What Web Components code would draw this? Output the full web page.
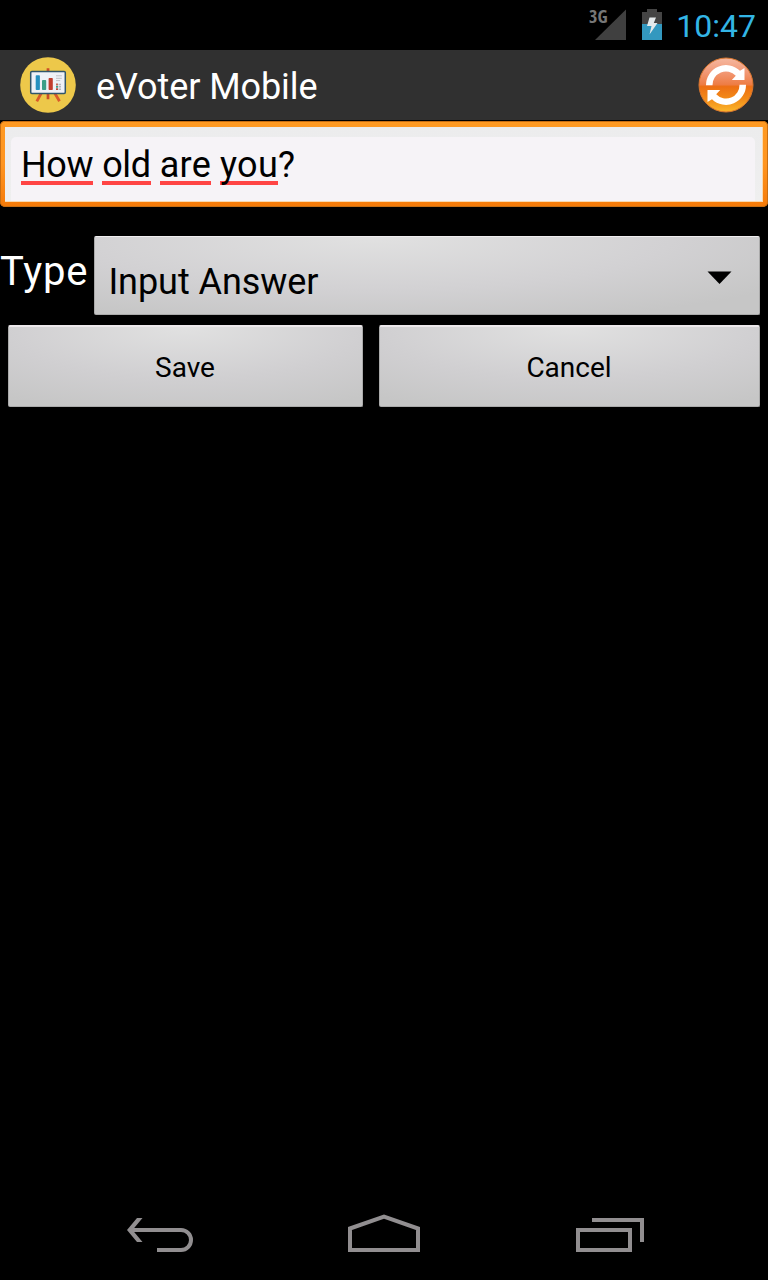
<!DOCTYPE html>
<html lang="en">
<head>
<meta charset="utf-8">
<title>eVoter Mobile</title>
<style>
html,body{margin:0;background:#000}
body{font-family:Roboto,"Liberation Sans",sans-serif;width:768px;height:1280px;overflow:hidden}
</style>
</head>
<body>
<voter-app></voter-app>
<script>
const define = (name, html) => customElements.define(name, class extends HTMLElement {
  constructor() {
    super();
    const t = document.createElement('template');
    t.innerHTML = html;
    this.attachShadow({mode: 'open'}).append(t.content.cloneNode(true));
  }
});

define('status-bar', `
<style>
:host{display:flex;height:50px;background:#000;justify-content:flex-end;color:#33b5e5;box-sizing:border-box;padding-right:12px}
.net{font:bold 17px/17px "Open Sans",Roboto,sans-serif;font-stretch:condensed;color:#777;width:19px;margin-top:8px;height:17px;white-space:nowrap}
.net span{display:inline-block;transform:scaleX(1.05);transform-origin:0 0}
svg{display:block;flex:none}
.time{font-size:32px;line-height:50px;padding-top:1px;box-sizing:border-box;height:50px;margin-left:12px;width:80px;text-align:right;white-space:nowrap}
</style>
<div class="net"><span>3G</span></div>
<svg style="margin-left:-13px" width="31" height="50"><path d="M0 40L31 9.500V40z" fill="#404040"/></svg>
<svg style="margin-left:15px;margin-right:1px" width="22" height="50"><path d="M1 12h5V9h10v3h5v28H1z" fill="#444"/><path d="M1 24h20v16H1z" fill="#3398bf"/><path d="M8.500 17.500H15L12.800 23H16.500L8.500 34.500 10.500 26H6z" fill="#e4e9eb"/></svg>
<div class="time">10:47</div>`);

define('app-logo', `
<style>:host{display:block;width:56px;height:56px}svg{display:block}</style>
<svg width="56" height="56">
<circle cx="28" cy="28" r="27.800" fill="#edc84a"/>
<path d="M28 11.300v3M28 37v5.300" stroke="#cc4c27" stroke-width="2.700"/>
<path d="M21.300 36L16.800 44.300M34.700 36L39.500 44.300" stroke="#d95a2b" stroke-width="2.800"/>
<rect x="10.700" y="14.400" width="34.600" height="22" rx="1.200" fill="#eff1f7" stroke="#31566b" stroke-width="1.500"/>
<rect x="15.700" y="18.300" width="4.200" height="14.800" rx=".8" fill="#2690bf"/><rect x="22" y="23" width="4.200" height="10.100" rx=".8" fill="#3b9e88"/><rect x="28.600" y="21" width="4.200" height="12.100" rx=".8" fill="#c13c2d"/>
<path d="M36 18.800h5.800M36 21.300h5.800M36 23.600h4.200" stroke="#bfc1c5"/>
<path d="M36 27.500h2" stroke="#c66a59" stroke-width="1.800"/><path d="M36 29.800h2" stroke="#3b9e88" stroke-width="1.800"/><path d="M36 32.200h2" stroke="#b5483c" stroke-width="1.800"/>
<path d="M38.500 27.500h2.500M38.500 29.800h2.500M38.500 32.200h2.500" stroke="#b5b8bd" stroke-width="1.400"/>
</svg>`);

define('refresh-button', `
<style>:host{display:block;width:56px;height:56px}svg{display:block}</style>
<svg width="56" height="56">
<defs><linearGradient id="g" x2="0" y2="1"><stop offset="0" stop-color="#f5b8a0"/><stop offset=".25" stop-color="#f29a78"/><stop offset=".49" stop-color="#ee7d45"/><stop offset=".53" stop-color="#ed6f14"/><stop offset=".75" stop-color="#f28a18"/><stop offset="1" stop-color="#fbb72c"/></linearGradient></defs>
<circle cx="28" cy="28" r="27" fill="url(#g)" stroke="#d9762e" stroke-width="1"/>
<g fill="#fff"><path d="M8 28.300A20 20 0 0 1 42 13.800L46.500 11V23H33.800L37.800 18.700A13.500 13.500 0 0 0 14.500 28.300z"/>
<path d="M8 28.300A20 20 0 0 1 42 13.800L46.500 11V23H33.800L37.800 18.700A13.500 13.500 0 0 0 14.500 28.300z" transform="rotate(180 28 28)"/></g>
</svg>`);

define('action-bar', `
<style>
:host{display:flex;box-sizing:border-box;height:70px;background:#303030;align-items:center;padding:0 14px 0 20px;color:#fff}
.t{font-size:36px;letter-spacing:-.08px;line-height:42px;padding-top:3px;margin-left:20px;flex:1;white-space:nowrap}
</style>
<app-logo></app-logo><div class="t"><slot></slot></div><refresh-button></refresh-button>`);

define('question-input', `
<style>
:host{display:block;box-sizing:border-box;height:86px;margin-top:1px;border-radius:5px;padding:6px 5px 5px;background:linear-gradient(#ff9a22,#ff9520 50%,#f57a08);box-shadow:inset 0 0 0 1px #c86e12}
.o{height:75px;box-sizing:border-box;background:linear-gradient(#ececed,#efefef);padding:10px 7px 0 6px;border:solid #f8d9b0;border-width:0 1px 1px 0}
.i{height:64px;box-sizing:border-box;background:#f6f3f7;border-radius:5px 5px 0 0;padding:5px 0 0 10px;font-size:36px;line-height:46px;color:#000;white-space:nowrap}
</style>
<div class="o"><div class="i"><slot></slot></div></div>`);

define('spell-word', `
<style>:host{display:inline-block;line-height:46px;height:46px;background:linear-gradient(#ff4444,#ff4444) 0 39px/100% 4px no-repeat}</style><slot></slot>`);

define('type-spinner', `
<style>
:host{display:flex;box-sizing:border-box;width:666px;height:79px;border:1px solid #aaa;border-top-color:#f0eef0;border-radius:2px;background:radial-gradient(ellipse 75% 115% at 42% 0,#e1e1e1,#d2d1d3 60%,#c6c6c6);padding:12px 27px 0 13px;font-size:36px;letter-spacing:-.06px;color:#000;justify-content:space-between}
.t{line-height:66px;height:66px;white-space:nowrap}
svg{display:block;margin-top:22px}
</style>
<div class="t"><slot></slot></div><svg width="25" height="14"><path d="M.5.500h24L12.500 13z"/></svg>`);

define('gray-button', `
<style>
:host{display:block;box-sizing:border-box;height:82px;border:1px solid #aaa;border-top:2px solid #ece8eb;border-radius:2px;background:radial-gradient(ellipse 85% 110% at 50% 0,#e1e1e1,#d0cfd1 60%,#c6c6c6);font-size:28px;line-height:82px;color:#000;text-align:center}
</style><slot></slot>`);

define('nav-bar', `
<style>:host{display:grid;grid-template-columns:221px 228px 69px;height:96px;align-items:center;box-sizing:border-box;padding:8px 0 0 127px}svg{display:block;fill:none;stroke:#918e90;stroke-width:4}</style>
<svg width="68" height="40"><path d="M3 14H54A10 10 0 0 1 54 34H30"/><path d="M10 2h5.500L5.500 14L15.500 26H10L0 14z" fill="#918e90" stroke="none"/></svg>
<svg width="72" height="40" overflow="visible"><path d="M2 12.500L36 .5L70 12.500V34H2z"/></svg>
<svg width="69" height="40"><path d="M2 14H54V34H2zM16 4H66V26"/></svg>`);

define('voter-app', `
<style>
:host{display:flex;flex-direction:column;width:768px;height:1280px;background:#000}
.row{display:flex;margin-top:29px;height:79px}
.label{width:94.400px;font-size:40px;letter-spacing:.8px;line-height:72px;color:#fff;white-space:nowrap}
.buttons{display:grid;grid-template-columns:355px 381px;gap:16px;margin:10px 0 0 8px;height:82px}
.buttons gray-button{text-indent:-1px}
.tight{letter-spacing:-.35px}.wide{letter-spacing:.3px}
main{flex:1}
</style>
<status-bar></status-bar>
<action-bar>eVoter Mobile</action-bar>
<main>
<question-input><spell-word class="tight">How</spell-word> <spell-word class="tight">old</spell-word> <spell-word class="wide">are</spell-word> <spell-word class="wide">you</spell-word>?</question-input>
<div class="row"><div class="label">Type</div><type-spinner>Input Answer</type-spinner></div>
<div class="buttons"><gray-button>Save</gray-button><gray-button>Cancel</gray-button></div>
</main>
<nav-bar></nav-bar>`);
</script>
</body>
</html>
